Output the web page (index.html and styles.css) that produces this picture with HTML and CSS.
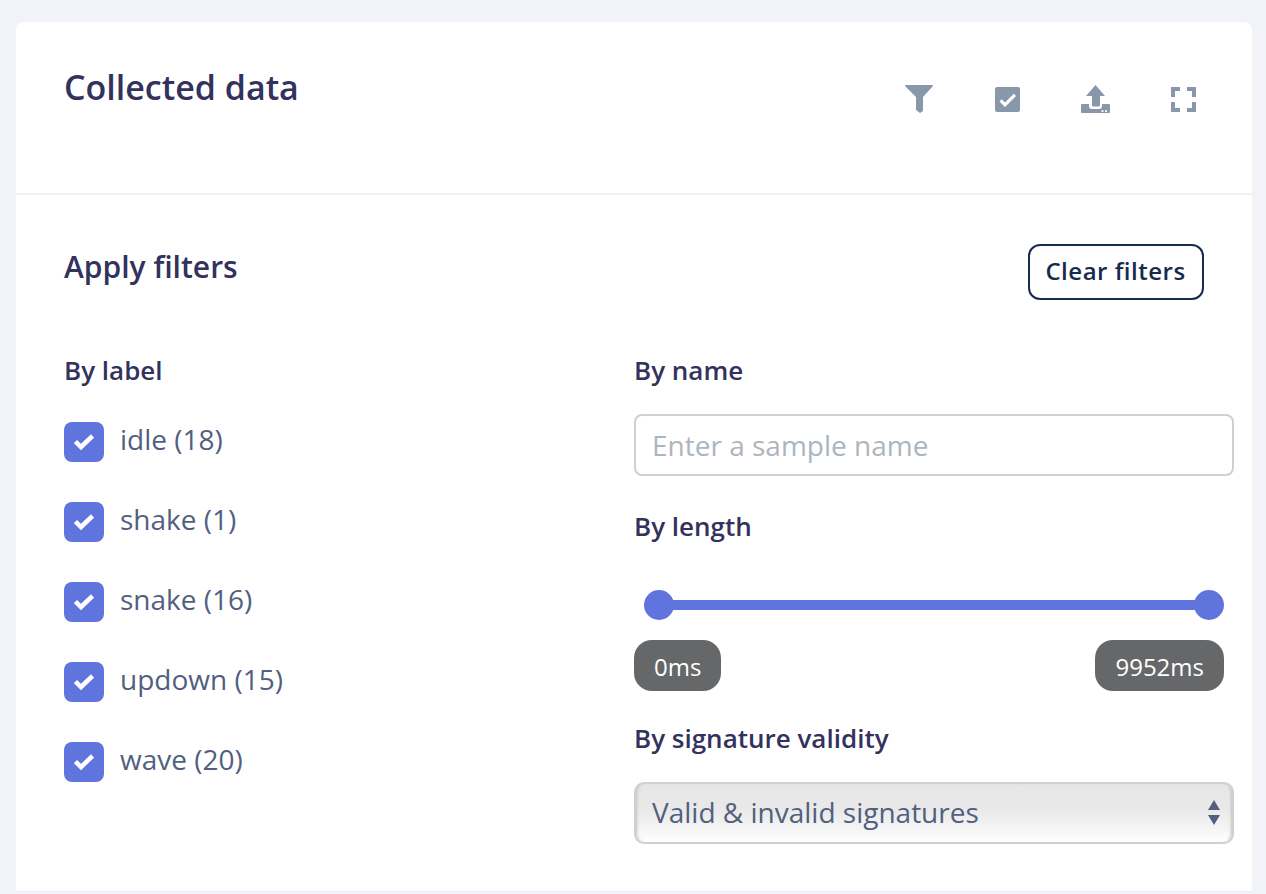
FILE: index.html
```html
<!DOCTYPE html>
<html lang="en">
<head>
<meta charset="utf-8">
<title>Collected data</title>
<link rel="stylesheet" href="styles.css">
</head>
<body>
<main class="card">
  <header class="card-header">
    <h1 class="title">Collected data</h1>
    <div class="tools">
      <svg class="tool" viewBox="0 0 32 32"><path d="M1 2Q1 1 2 1H28Q29 1 29 2L19 13V27L16 29 12 26V13Z"/></svg>
      <svg class="tool" viewBox="0 0 32 32"><path fill-rule="evenodd" d="M5 3H26a2 2 0 0 1 2 2V26a2 2 0 0 1-2 2H5a2 2 0 0 1-2-2V5a2 2 0 0 1 2-2ZM13 23L24 12 21.800 9.800 13 18.600 9.700 15.300 7.500 17.500Z"/></svg>
      <svg class="tool" viewBox="0 0 32 32"><path fill-rule="evenodd" d="M15.500 1L25 12H20V21Q20 22.500 18.500 22.500H13.500Q12 22.500 12 21V12H6ZM2 20H9V22Q9 25 12 25H19Q22 25 22 22V20H29Q30 20 30 21V28Q30 29 29 29H2Q1 29 1 28V21Q1 20 2 20ZM21.500 26.200V28H23.500V26.200ZM25 26.200V28H27V26.200Z"/></svg>
      <svg class="tool" viewBox="0 0 32 32"><path d="M3 3H12V7H7V13H3ZM19 3H28V13H24V7H19ZM3 18H7V24H12V28H3ZM24 18H28V28H19V24H24Z"/></svg>
    </div>
  </header>
  <section class="filters">
    <div class="filters-top">
      <h2 class="subtitle">Apply filters</h2>
      <button class="clear" type="button">Clear filters</button>
    </div>
    <div class="filters-grid">
      <div class="col-label">
        <h3 class="field-title">By label</h3>
        <ul class="labels">
          <li class="label-row"><span class="box"><svg viewBox="0 0 20 20"><path d="M1.500 9.500l5.500 5.500L18.500 4"/></svg></span>idle (18)</li>
          <li class="label-row"><span class="box"><svg viewBox="0 0 20 20"><path d="M1.500 9.500l5.500 5.500L18.500 4"/></svg></span>shake (1)</li>
          <li class="label-row"><span class="box"><svg viewBox="0 0 20 20"><path d="M1.500 9.500l5.500 5.500L18.500 4"/></svg></span>snake (16)</li>
          <li class="label-row"><span class="box"><svg viewBox="0 0 20 20"><path d="M1.500 9.500l5.500 5.500L18.500 4"/></svg></span>updown (15)</li>
          <li class="label-row"><span class="box"><svg viewBox="0 0 20 20"><path d="M1.500 9.500l5.500 5.500L18.500 4"/></svg></span>wave (20)</li>
        </ul>
      </div>
      <div class="col-fields">
        <h3 class="field-title">By name</h3>
        <input class="name-input" type="text" placeholder="Enter a sample name">
        <h3 class="field-title length-title">By length</h3>
        <div class="slider">
          <div class="track"></div>
          <span class="thumb thumb-start"></span>
          <span class="thumb thumb-end"></span>
        </div>
        <div class="range-tags">
          <span class="tag">0ms</span>
          <span class="tag">9952ms</span>
        </div>
        <h3 class="field-title validity-title">By signature validity</h3>
        <div class="select-wrap">
          <select class="select">
            <option>Valid &amp; invalid signatures</option>
          </select>
          <svg class="select-arrows" viewBox="0 0 12 26"><path d="M6 0l6 10H0ZM0 15h12L6 25Z"/></svg>
        </div>
      </div>
    </div>
  </section>
</main>
</body>
</html>
```
FILE: styles.css
```css
* {
  box-sizing: border-box;
}

html, body {
  margin: 0;
  height: 894px;
  overflow: hidden;
  background: #f1f3f9;
}

body {
  padding: 22px 14px 0 16px;
  font-family: "Open Sans", sans-serif;
  color: #32325d;
}

.card {
  height: 870px;
  background: #fff;
  border-radius: 8px 8px 0 0;
  border-bottom: 1px solid #e9ecef;
}

.card-header {
  height: 173px;
  padding: 43px 46px 0 48px;
  display: flex;
  justify-content: space-between;
  align-items: flex-start;
  border-bottom: 2px solid #eef0f3;
}

.title {
  margin: 0;
  font-size: 34px;
  line-height: 44px;
  font-weight: 600;
  color: #32325d;
}

.tools {
  display: flex;
  gap: 56px;
  padding: 19px 6px 0 0;
}

.tool {
  width: 32px;
  height: 32px;
  fill: #8898aa;
  display: block;
}

.filters {
  padding: 49px 18px 0 48px;
}

.filters-top {
  display: flex;
  justify-content: space-between;
  align-items: flex-start;
  padding-right: 30px;
}

.subtitle {
  margin: 0;
  font-size: 30px;
  line-height: 46px;
  font-weight: 600;
  color: #32325d;
}

.clear {
  width: 176px;
  height: 56px;
  padding: 0 1px 4px 0;
  background: #fff;
  border: 2px solid #172b4d;
  border-radius: 12px;
  font-family: inherit;
  font-size: 24px;
  font-weight: 600;
  letter-spacing: 0.5px;
  color: #172b4d;
}

.filters-grid {
  display: grid;
  grid-template-columns: 570px 600px;
  margin-top: 50px;
}

.field-title {
  margin: 0;
  font-size: 26px;
  line-height: 40px;
  font-weight: 600;
  color: #32325d;
}

.labels {
  list-style: none;
  margin: 32px 0 0;
  padding: 0;
  display: flex;
  flex-direction: column;
  gap: 40px;
}

.label-row {
  display: flex;
  align-items: flex-start;
  gap: 16px;
  height: 40px;
  font-size: 28px;
  line-height: 34px;
  color: #525f7f;
}

.box {
  width: 40px;
  height: 40px;
  border-radius: 8px;
  background: #6074de;
  display: flex;
  align-items: center;
  justify-content: center;
}

.box svg {
  width: 20px;
  height: 20px;
  fill: none;
  stroke: #fff;
  stroke-width: 4.5px;
}

.name-input {
  display: block;
  width: 600px;
  height: 62px;
  margin-top: 24px;
  padding: 0 16px;
  border: 2px solid #cad1d7;
  border-radius: 8px;
  background: #fff;
  font-family: inherit;
  font-size: 28px;
  color: #525f7f;
}

.name-input::placeholder {
  color: #adb5bd;
  opacity: 1;
}

.length-title {
  margin-top: 30px;
}

.slider {
  position: relative;
  height: 30px;
  margin: 44px 10px 0 10px;
}

.track {
  position: absolute;
  left: 10px;
  right: 10px;
  top: 10px;
  height: 10px;
  background: #6074de;
}

.thumb {
  position: absolute;
  top: 0;
  width: 30px;
  height: 30px;
  border-radius: 50%;
  background: #6074de;
}

.thumb-start {
  left: 0;
}

.thumb-end {
  right: 0;
}

.range-tags {
  display: flex;
  justify-content: space-between;
  margin: 20px 10px 0 0;
}

.tag {
  height: 51px;
  padding: 0 20px;
  border-radius: 18px;
  background: #666769;
  color: #fff;
  font-size: 24px;
  line-height: 54px;
}

.validity-title {
  margin-top: 27px;
}

.select-wrap {
  position: relative;
  margin-top: 24px;
}

.select {
  display: block;
  width: 600px;
  height: 62px;
  padding: 0 16px 2px;
  appearance: none;
  border: 2px solid #cad1d7;
  border-radius: 10px;
  background: linear-gradient(180deg, #e6e6e6 0%, #e9e9e9 45%, #f6f6f6 80%, #fff 100%);
  box-shadow: inset 3px 0 3px -2px #c0c0c0, inset -3px 0 3px -2px #c0c0c0;
  font-family: inherit;
  font-size: 28px;
  color: #525f7f;
}

.select-arrows {
  position: absolute;
  right: 14px;
  top: 18px;
  width: 12px;
  height: 26px;
  fill: #525f7f;
}
```
